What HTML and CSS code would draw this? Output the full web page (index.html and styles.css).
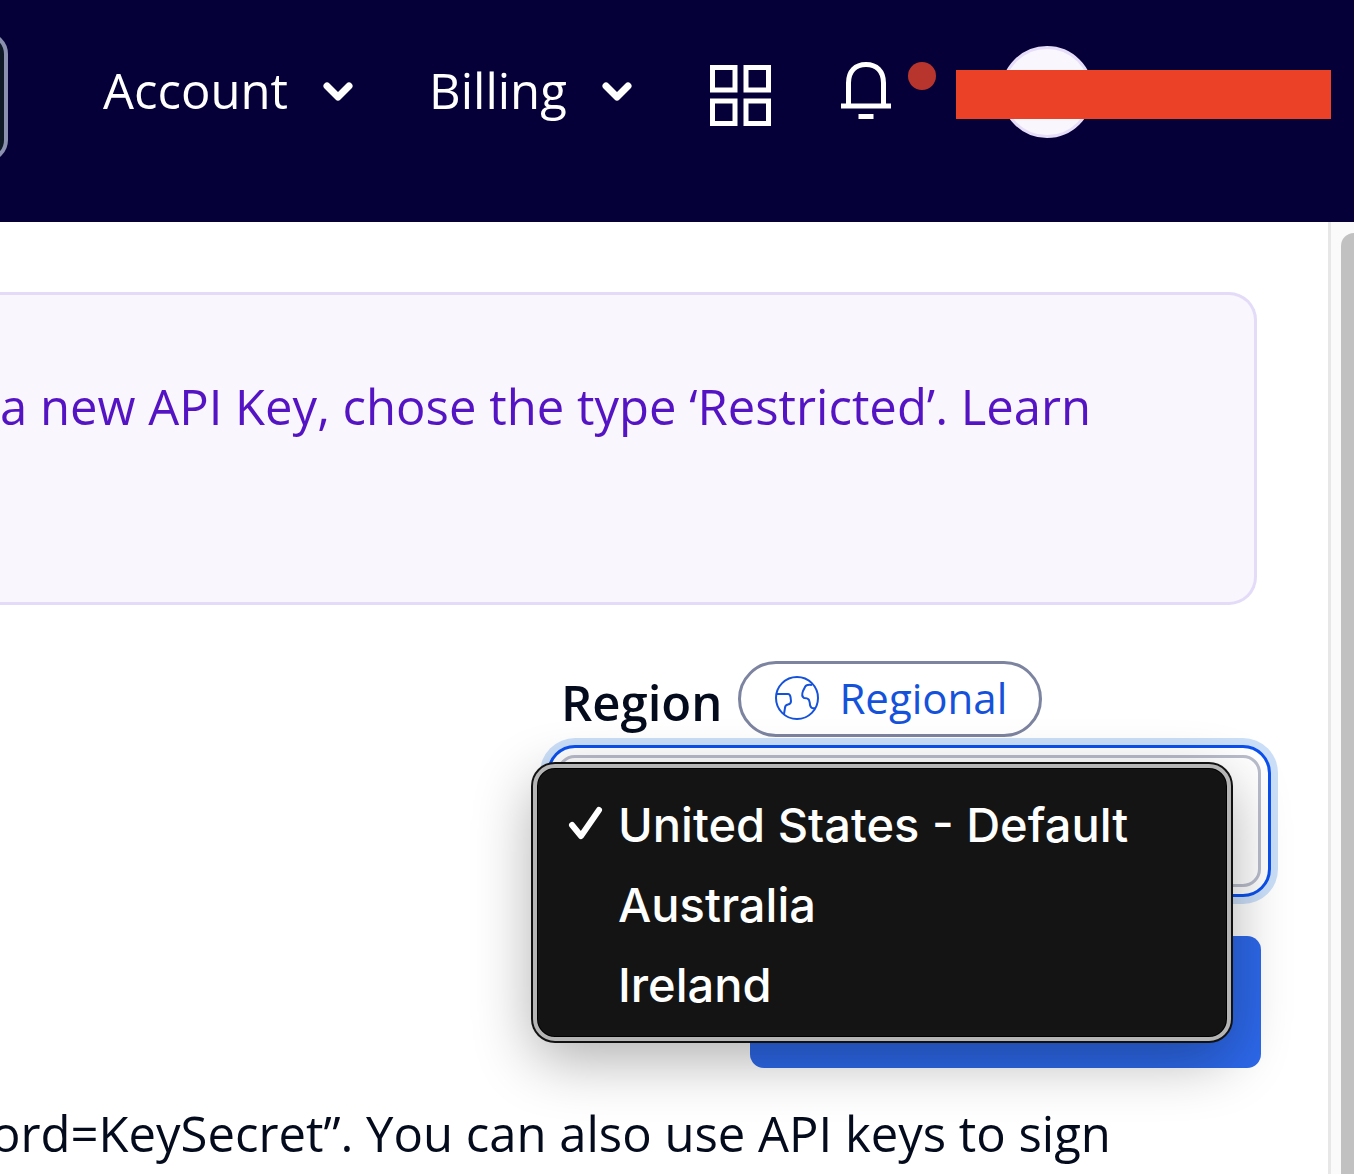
FILE: index.html
```html
<!DOCTYPE html>
<html lang="en">
<head>
<meta charset="utf-8">
<title>API Keys</title>
<link rel="stylesheet" href="styles.css">
</head>
<body>
<header class="topbar">
  <input class="search" type="search" aria-label="Search">
  <nav class="nav" aria-label="Main">
    <button class="nav-item" type="button">Account
      <svg class="chevron" viewBox="0 0 30 20" aria-hidden="true"><path d="M4 4 L15 15 L26 4"/></svg>
    </button>
    <button class="nav-item" type="button">Billing
      <svg class="chevron" viewBox="0 0 30 20" aria-hidden="true"><path d="M4 4 L15 15 L26 4"/></svg>
    </button>
  </nav>
  <button class="icon-button apps" type="button" aria-label="Apps">
    <svg width="62" height="62" viewBox="0 0 62 62" aria-hidden="true"><path d="M2.500 2.500h22.500v22.500h-22.500z M36 2.500h22.500v22.500H36z M2.500 36h22.500v22.500h-22.500z M36 36h22.500v22.500H36z"/></svg>
  </button>
  <button class="icon-button bell" type="button" aria-label="Notifications">
    <svg width="50" height="58" viewBox="0 0 50 58" aria-hidden="true"><path d="M7.500 44V21C7.500 9 14.500 2.500 25 2.500S42.500 9 42.500 21V44 M0 44H50 M17.500 54.500H32.500"/></svg>
    <span class="unread"></span>
  </button>
  <div class="profile">
    <span class="avatar"></span>
    <span class="redaction"></span>
  </div>
</header>
<div class="page">
  <main class="content">
    <section class="banner">
      <p class="text">a new API Key, chose the type ‘Restricted’. Learn</p>
    </section>
    <form class="region-form">
      <div class="label-row">
        <label class="region-label" for="region">Region</label>
        <button class="pill" type="button">
          <svg width="44" height="44" viewBox="0 0 44 44" aria-hidden="true"><circle cx="22" cy="22" r="21"/><path d="M2 18H13Q15 18 15.500 21L16 25Q16 28 13 28.500Q10 29 10 32L9 38 M37 9Q31 8 30 11Q29 13 28 15Q26 20 29 22Q33 22 34 24Q35 27 35 29Q36 33 40 32"/></svg>
          Regional
        </button>
      </div>
      <div class="select-wrap">
        <select class="select" id="region">
          <option>United States - Default</option>
          <option>Australia</option>
          <option>Ireland</option>
        </select>
        <ul class="menu" role="listbox" aria-label="Region">
          <li class="option" role="option" aria-selected="true"><svg class="check" viewBox="0 0 36 36" aria-hidden="true"><path d="M5 20 L14 31 L32 5"/></svg>United States - Default</li>
          <li class="option" role="option" aria-selected="false">Australia</li>
          <li class="option" role="option" aria-selected="false">Ireland</li>
        </ul>
      </div>
      <button class="primary" type="button" aria-label="Create new API key"></button>
    </form>
    <p class="text note">ord=KeySecret”. You can also use API keys to sign</p>
  </main>
  <div class="scroll-track"><div class="scroll-thumb"></div></div>
</div>
</body>
</html>
```
FILE: styles.css
```css
* { box-sizing: border-box; }

body {
  margin: 0;
  min-height: 100vh;
  display: flex;
  flex-direction: column;
  overflow: hidden;
  background: #fff;
  color: #040b1c;
  font-family: "Open Sans", "Noto Sans", sans-serif;
  font-size: 49px;
  line-height: 64px;
}

button { font: inherit; border: 0; padding: 0; background: none; }

svg { fill: none; stroke: currentColor; }

.topbar {
  display: flex;
  align-items: flex-start;
  height: 222px;
  padding-right: 23px;
  background: #050037;
  color: #fff;
}

.search {
  flex: none;
  width: 60px;
  height: 130px;
  margin: 32px 95px 0 -52px;
  padding: 0;
  border: 4px solid #8a90ad;
  border-radius: 22px;
  background: #101a26;
}

.nav { display: flex; gap: 76px; margin-top: 58px; }

.nav-item { display: flex; align-items: center; gap: 35px; color: #fff; font-weight: 500; }

.chevron { width: 30px; height: 20px; margin-top: 4px; stroke-width: 7; stroke-linecap: round; stroke-linejoin: round; }

.icon-button { display: flex; color: #fff; stroke-width: 5; }

.apps { margin: 65px 0 0 78px; }

.bell { gap: 17px; margin: 62px 0 0 69px; }

.unread { width: 28px; height: 28px; border-radius: 50%; background: #b8352d; }

.profile {
  position: relative;
  flex: 1;
  height: 92px;
  margin: 46px 0 0 20px;
  padding-left: 45px;
}

.avatar {
  display: block;
  width: 92px;
  height: 92px;
  border: 3px solid #e6def8;
  border-radius: 50%;
  background: #f9f6fe;
}

.redaction {
  position: absolute;
  inset: 24px 0 19px;
  background: #eb4127;
}

.page { display: flex; flex: 1; }

.content { flex: 1; min-width: 0; padding: 70px 67px 0 0; }

.text { margin: 0; white-space: nowrap; }

.banner {
  height: 313px;
  margin-right: 4px;
  padding-top: 79px;
  border: solid #e3dbf8;
  border-width: 3px 3px 3px 0;
  border-radius: 0 28px 28px 0;
  background: #f9f6fd;
  color: #5514c4;
}

.region-form {
  display: flex;
  flex-direction: column;
  width: 704px;
  margin: 56px 0 0 auto;
}

.label-row { display: flex; align-items: center; gap: 16px; padding-left: 4px; }

.region-label { font-weight: 600; padding-top: 5px; }

.pill {
  display: flex;
  align-items: center;
  gap: 20px;
  height: 76px;
  padding: 0 32px 2px 34px;
  border: 3px solid #7d84a0;
  border-radius: 38px;
  background: #fff;
  color: #1552db;
  font-size: 42px;
  stroke-width: 2;
}

.select-wrap { position: relative; margin-top: 18px; }

.select {
  display: block;
  width: 100%;
  height: 132px;
  padding: 0 60px;
  appearance: none;
  border: 3px solid #b9bccb;
  border-radius: 18px;
  background: #fff;
  color: inherit;
  font: inherit;
  outline: 3px solid #0b50ee;
  outline-offset: 7px;
  box-shadow: 0 0 0 7px #fff, 0 0 0 17px #cbdff9;
}

.menu {
  position: absolute;
  top: 9px;
  left: -24px;
  right: 30px;
  margin: 0;
  padding: 17px 0 12px 81px;
  list-style: none;
  border: 4px solid #b5b5b5;
  border-radius: 22px;
  background: #141414;
  color: #fff;
  font-family: Inter, sans-serif;
  font-size: 47px;
  font-weight: 500;
  line-height: 80px;
  box-shadow: inset 0 0 0 1px #000, 0 0 0 2px #111, 0 18px 60px rgba(0, 0, 0, 0.32);
}

.option { position: relative; white-space: nowrap; }

.check {
  position: absolute;
  left: -51px;
  top: 20px;
  width: 36px;
  height: 36px;
  stroke-width: 6;
  stroke-linecap: round;
  stroke-linejoin: round;
}

.primary {
  align-self: flex-end;
  width: 511px;
  height: 132px;
  margin-top: 49px;
  border-radius: 14px;
  background: #2d68ea;
}

.note { margin: 33px 0 0 -9px; }

.scroll-track {
  display: flex;
  width: 26px;
  padding: 11px 0 0 10px;
  border-left: 3px solid #e7e7e7;
  background: #fafafa;
}

.scroll-thumb { flex: 1; border-radius: 14px 0 0 0; background: #c1c1c1; }
```
